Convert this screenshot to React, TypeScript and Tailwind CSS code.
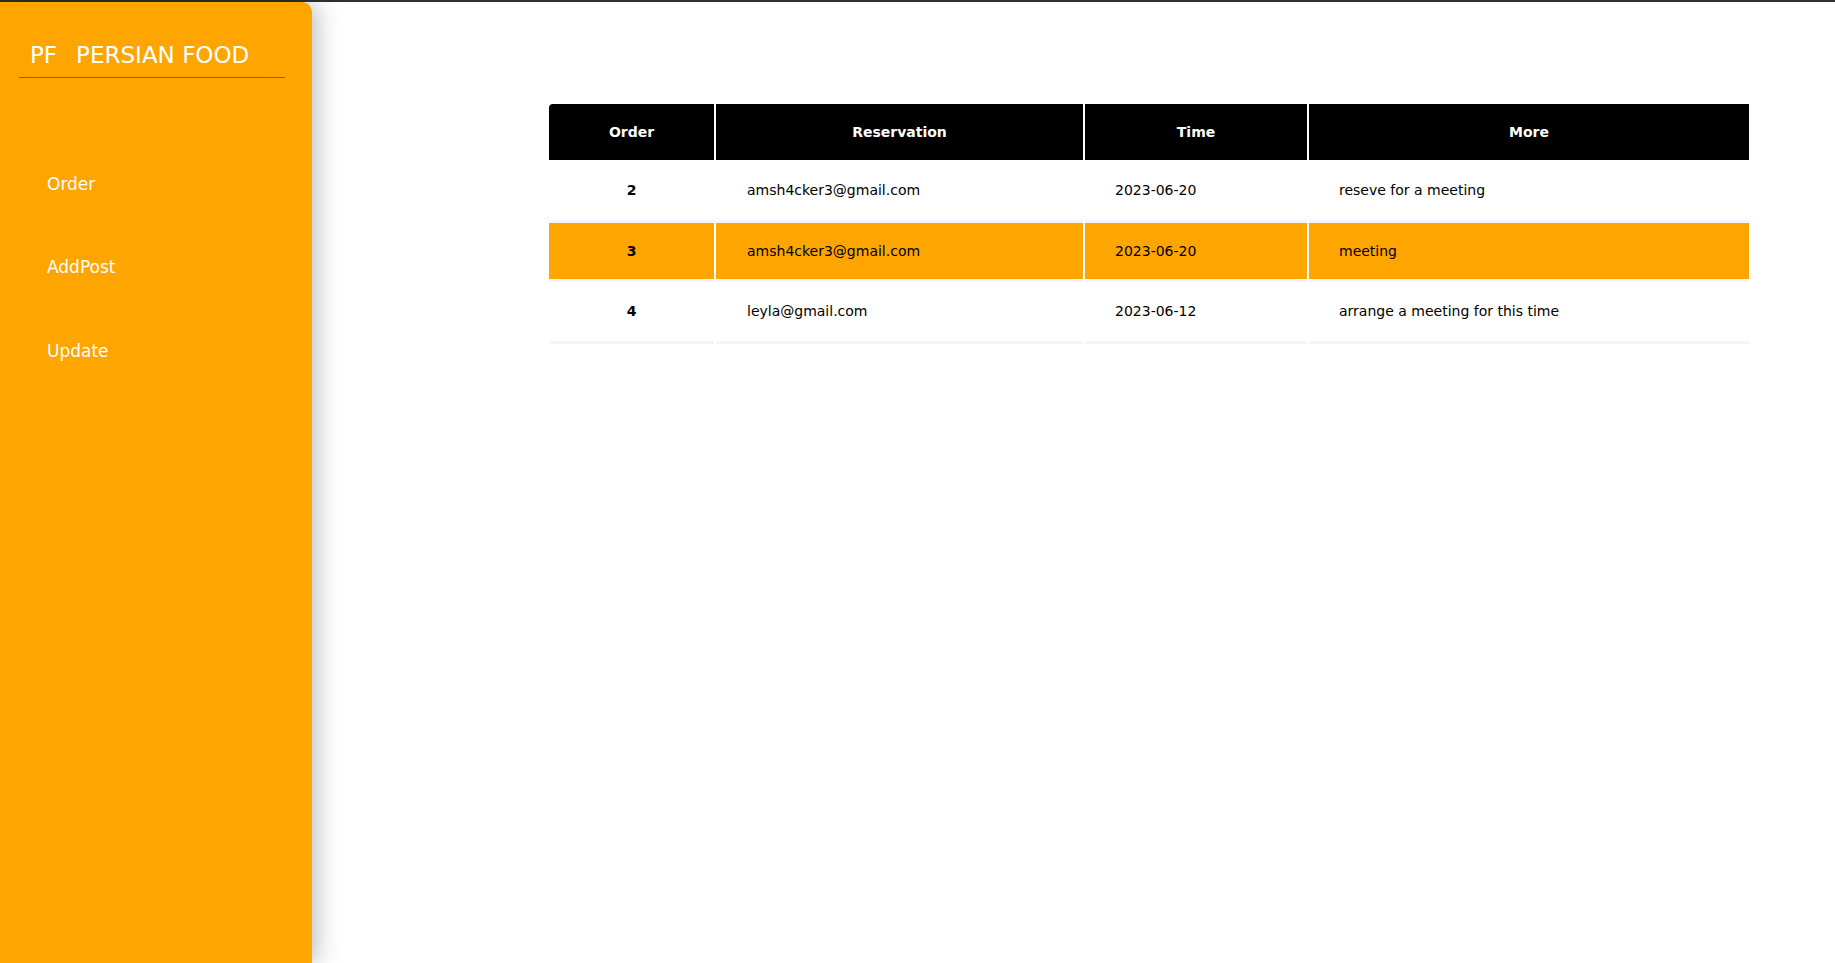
const ROWS = [
  { id: 2, email: "amsh4cker3@gmail.com", time: "2023-06-20", more: "reseve for a meeting", h: "h-[63px]" },
  { id: 3, email: "amsh4cker3@gmail.com", time: "2023-06-20", more: "meeting", h: "h-[59px]" },
  { id: 4, email: "leyla@gmail.com", time: "2023-06-12", more: "arrange a meeting for this time", h: "h-[62px]" },
];

const NAV = ["Order", "AddPost", "Update"];

function Sidebar() {
  return (
    <aside className="relative z-10 w-[312px] shrink-0 bg-[#ffa500] rounded-tr-[10px] shadow-[4px_0_24px_rgba(0,0,0,0.28)] text-white">
      <div className="pt-[40px] pl-[30px] text-[23px] leading-[27px] whitespace-nowrap">
        <span className="mr-[19px]">PF</span>
        <span>PERSIAN FOOD</span>
      </div>
      <div className="ml-[19px] mt-[8px] w-[266px] h-px bg-[#666]" />
      <nav className="mt-[96px] pl-[47px] flex flex-col gap-[63px] text-[17px] leading-[20px]">
        {NAV.map((item) => (
          <a key={item} className="cursor-pointer last:mt-px">
            {item}
          </a>
        ))}
      </nav>
    </aside>
  );
}

function OrdersTable() {
  return (
    <table className="w-[1204px] table-fixed border-separate border-spacing-x-[2px] border-spacing-y-0 -ml-[2px] text-[14px] text-black">
      <colgroup>
        <col className="w-[165px]" />
        <col className="w-[367px]" />
        <col className="w-[222px]" />
        <col />
      </colgroup>
      <thead>
        <tr className="bg-black text-white font-bold">
          <th className="h-[56px] rounded-tl-[4px]">Order</th>
          <th className="h-[56px]">Reservation</th>
          <th className="h-[56px]">Time</th>
          <th className="h-[56px]">More</th>
        </tr>
      </thead>
      <tbody>
        {ROWS.map((r, i) => {
          const hl = i === 1;
          const cell = `${r.h} border-b-[3px] border-[#f4f4f9] ${hl ? "bg-[#ffa500]" : ""}`;
          return (
            <tr key={r.id}>
              <td className={`${cell} text-center font-bold`}>{r.id}</td>
              <td className={`${cell} pl-[31px]`}>{r.email}</td>
              <td className={`${cell} pl-[30px]`}>{r.time}</td>
              <td className={`${cell} pl-[30px]`}>{r.more}</td>
            </tr>
          );
        })}
      </tbody>
    </table>
  );
}

export default function App() {
  return (
    <div className="min-h-[963px] flex flex-col bg-white font-['DejaVu_Sans',sans-serif]">
      <div className="h-[2px] bg-[#2f2f2f]" />
      <div className="flex flex-1">
        <Sidebar />
        <main className="flex-1 pt-[102px] pl-[237px]">
          <OrdersTable />
        </main>
      </div>
    </div>
  );
}
